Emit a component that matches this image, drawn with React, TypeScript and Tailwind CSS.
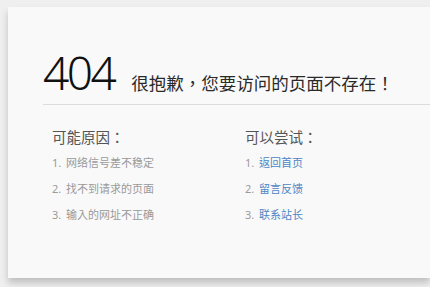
import React from "react";

const reasons = ["网络信号差不稳定", "找不到请求的页面", "输入的网址不正确"];
const tries = ["返回首页", "留言反馈", "联系站长"];

export default function App() {
  const font = { fontFamily: '"Noto Sans", "Noto Sans CJK TC", sans-serif' };
  const cjk = { fontFamily: '"Noto Sans CJK TC", "Noto Sans CJK SC", sans-serif' };
  return (
    <div className="w-[430px] h-[287px] overflow-hidden bg-[#efefef] pl-[8px] pt-[7px]" style={font}>
      <div className="h-[271px] bg-[#f9f9f9] shadow-[0_5px_7px_rgba(0,0,0,0.2)] pl-[35px]">
        <div className="flex items-baseline pt-[40px] h-[97px]">
          <span className="text-[46px] leading-[50px] text-[#111] font-light tracking-[-2.5px]">404</span>
          <span className="ml-[17px] text-[17.5px] text-[#2a2a2a]" style={cjk}>很抱歉，您要访问的页面不存在！</span>
        </div>
        <div className="h-px bg-[#dcdcdc]" />
        <div className="flex pl-[9px] pt-[22px]">
          <div className="w-[193px]">
            <div className="text-[14.5px] leading-[20px] text-[#555]" style={cjk}>可能原因：</div>
            <ul className="mt-[8px]">
              {reasons.map((r, i) => (
                <li key={i} className="h-[26px] text-[11px] leading-[16px] text-[#9a9a9a]">
                  {i + 1}. <span className="ml-[2px]">{r}</span>
                </li>
              ))}
            </ul>
          </div>
          <div>
            <div className="text-[14.5px] leading-[20px] text-[#555]" style={cjk}>可以尝试：</div>
            <ul className="mt-[8px]">
              {tries.map((r, i) => (
                <li key={i} className="h-[26px] text-[11px] leading-[16px] text-[#9a9a9a]">
                  {i + 1}. <a className="ml-[2px] text-[#4d86c6]">{r}</a>
                </li>
              ))}
            </ul>
          </div>
        </div>
      </div>
    </div>
  );
}
